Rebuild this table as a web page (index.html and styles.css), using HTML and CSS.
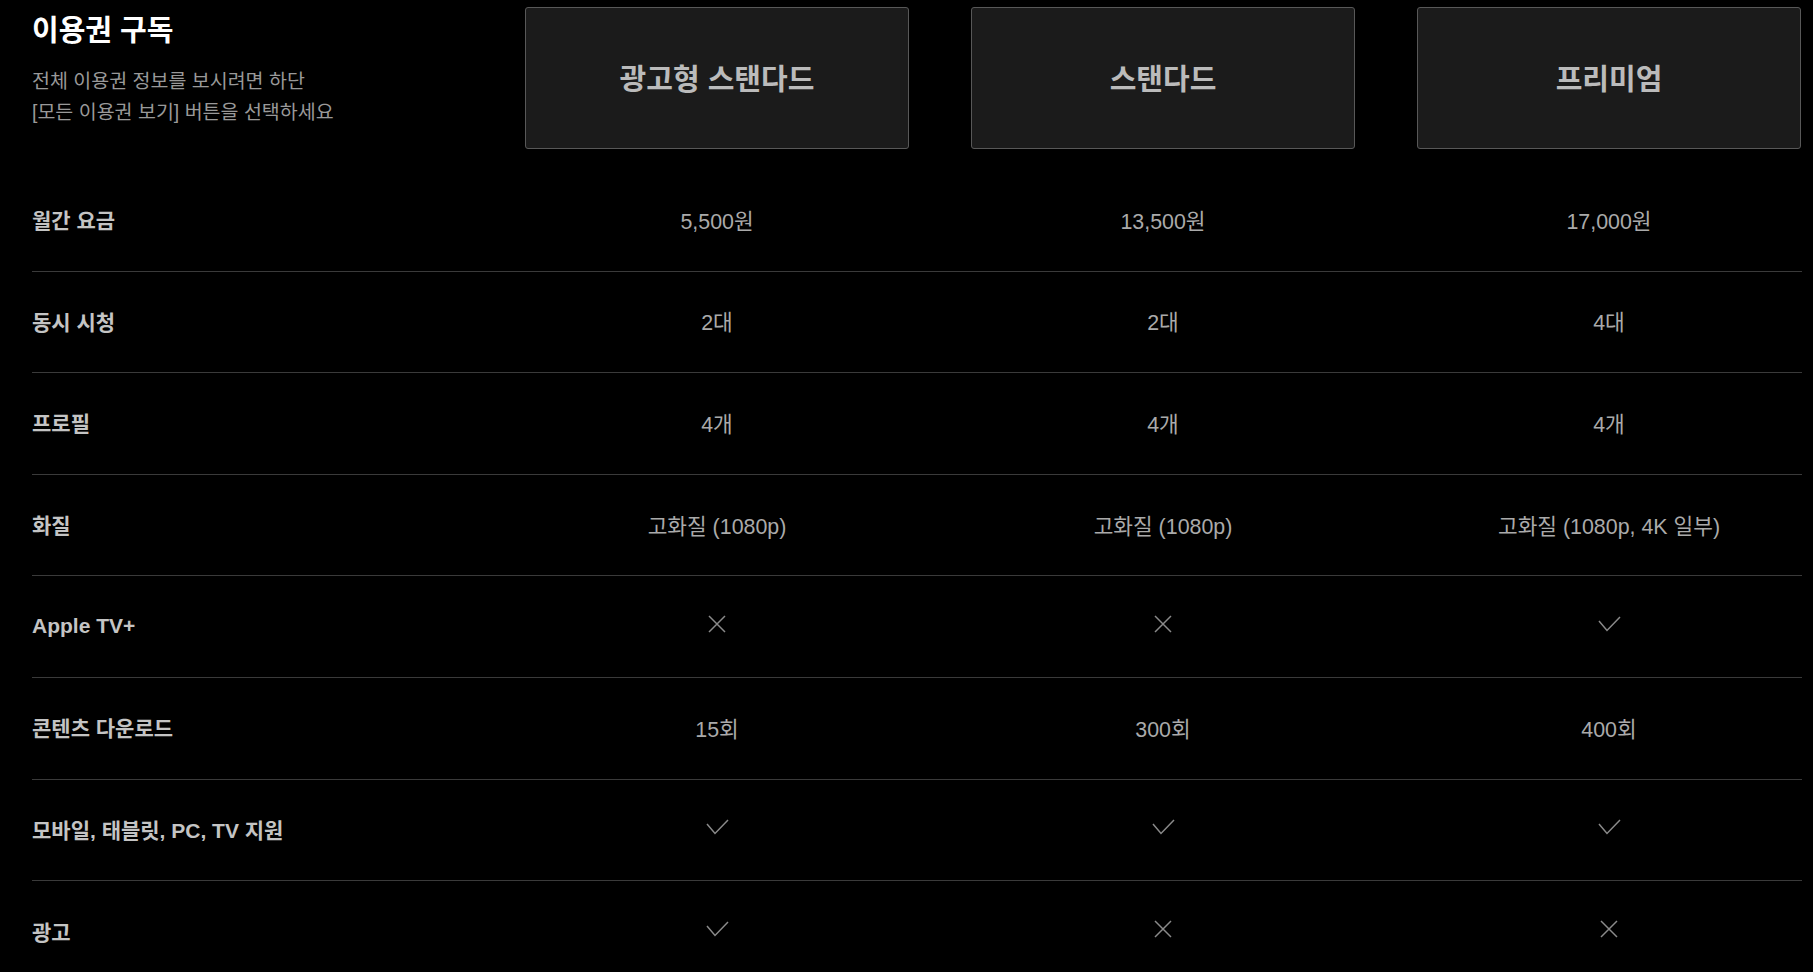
FILE: index.html
```html
<!DOCTYPE html>
<html lang="ko">
<head>
<meta charset="utf-8">
<title>이용권 구독</title>
<link rel="stylesheet" href="styles.css">
</head>
<body>
<main class="plans">
  <div class="grid header">
    <div class="intro">
      <h1 class="title">이용권 구독</h1>
      <p class="subtitle">전체 이용권 정보를 보시려면 하단<br>[모든 이용권 보기] 버튼을 선택하세요</p>
    </div>
    <div class="card">광고형 스탠다드</div>
    <div class="card">스탠다드</div>
    <div class="card">프리미엄</div>
  </div>

  <div class="grid row">
    <div class="label">월간 요금</div>
    <div class="value">5,500원</div>
    <div class="value">13,500원</div>
    <div class="value">17,000원</div>
  </div>
  <div class="grid row">
    <div class="label">동시 시청</div>
    <div class="value">2대</div>
    <div class="value">2대</div>
    <div class="value">4대</div>
  </div>
  <div class="grid row">
    <div class="label">프로필</div>
    <div class="value">4개</div>
    <div class="value">4개</div>
    <div class="value">4개</div>
  </div>
  <div class="grid row">
    <div class="label">화질</div>
    <div class="value">고화질 (1080p)</div>
    <div class="value">고화질 (1080p)</div>
    <div class="value">고화질 (1080p, 4K 일부)</div>
  </div>
  <div class="grid row">
    <div class="label">Apple TV+</div>
    <div class="value"><svg class="icon-x" width="18" height="18" viewBox="0 0 18 18"><path d="M1 1 L17 17 M17 1 L1 17"/></svg></div>
    <div class="value"><svg class="icon-x" width="18" height="18" viewBox="0 0 18 18"><path d="M1 1 L17 17 M17 1 L1 17"/></svg></div>
    <div class="value"><svg class="icon-check" width="23" height="16" viewBox="0 0 23 16"><path d="M1 5 L9 14.5 L22 1"/></svg></div>
  </div>
  <div class="grid row">
    <div class="label">콘텐츠 다운로드</div>
    <div class="value">15회</div>
    <div class="value">300회</div>
    <div class="value">400회</div>
  </div>
  <div class="grid row">
    <div class="label">모바일, 태블릿, PC, TV 지원</div>
    <div class="value"><svg class="icon-check" width="23" height="16" viewBox="0 0 23 16"><path d="M1 5 L9 14.5 L22 1"/></svg></div>
    <div class="value"><svg class="icon-check" width="23" height="16" viewBox="0 0 23 16"><path d="M1 5 L9 14.5 L22 1"/></svg></div>
    <div class="value"><svg class="icon-check" width="23" height="16" viewBox="0 0 23 16"><path d="M1 5 L9 14.5 L22 1"/></svg></div>
  </div>
  <div class="grid row last">
    <div class="label">광고</div>
    <div class="value"><svg class="icon-check" width="23" height="16" viewBox="0 0 23 16"><path d="M1 5 L9 14.5 L22 1"/></svg></div>
    <div class="value"><svg class="icon-x" width="18" height="18" viewBox="0 0 18 18"><path d="M1 1 L17 17 M17 1 L1 17"/></svg></div>
    <div class="value"><svg class="icon-x" width="18" height="18" viewBox="0 0 18 18"><path d="M1 1 L17 17 M17 1 L1 17"/></svg></div>
  </div>
</main>
</body>
</html>
```

FILE: styles.css
```css
html, body {
  margin: 0;
  padding: 0;
  background: #000;
}

body {
  font-family: "Liberation Sans", "Noto Sans CJK KR", sans-serif;
  color: #aaa;
  overflow: hidden;
}

.plans {
  padding: 7px 11px 0 32px;
}

.grid {
  display: grid;
  grid-template-columns: 431px repeat(3, 384px);
  column-gap: 62px;
}

.header {
  margin-bottom: 21px;
}

.intro {
  padding-top: 6px;
}

.title {
  margin: 0;
  font-size: 29px;
  line-height: 36px;
  font-weight: 700;
  color: #fff;
}

.subtitle {
  margin: 17px 0 0;
  font-size: 19.5px;
  line-height: 31px;
  color: #999;
}

.card {
  height: 142px;
  box-sizing: border-box;
  border: 1px solid #585858;
  border-radius: 3px;
  background: #1b1b1b;
  display: flex;
  align-items: center;
  justify-content: center;
  font-size: 29px;
  font-weight: 700;
  color: #bbb;
  padding-bottom: 2px;
}

.row {
  height: 101.6px;
  box-sizing: border-box;
  border-bottom: 1px solid #3a3a3a;
  align-items: center;
  padding-bottom: 2px;
}

.row.last {
  border-bottom: none;
}

.label {
  font-size: 21px;
  font-weight: 700;
  color: #c4c4c4;
  white-space: nowrap;
}

.value {
  font-size: 21.4px;
  color: #aaa;
  text-align: center;
  display: flex;
  justify-content: center;
  align-items: center;
  white-space: nowrap;
}

.value svg {
  position: relative;
  top: -2px;
}

.icon-x path,
.icon-check path {
  fill: none;
  stroke: #8a8a8a;
  stroke-width: 1.5;
}
```
